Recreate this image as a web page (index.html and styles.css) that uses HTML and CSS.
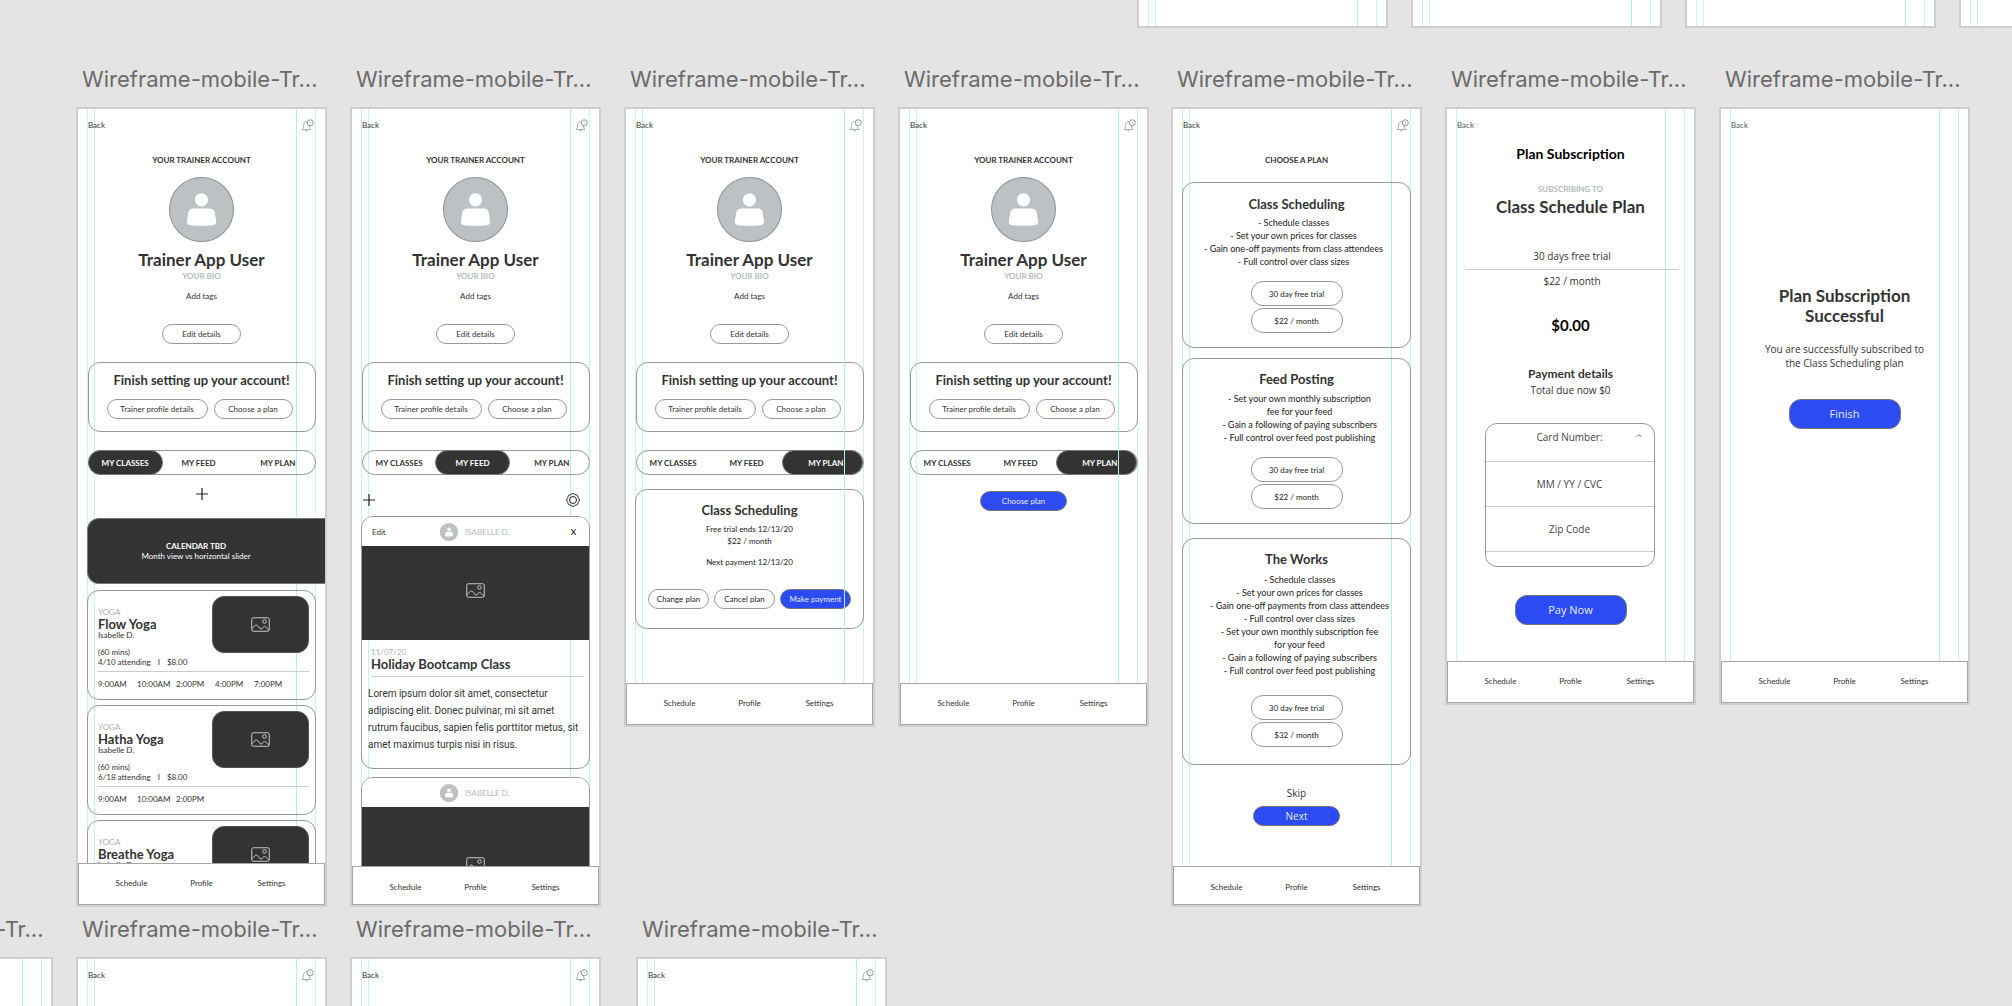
FILE: index.html
```html
<!DOCTYPE html>
<html lang="en">
<head>
<meta charset="utf-8">
<title>Trainer app wireframes</title>
<link rel="stylesheet" href="styles.css">
</head>
<body>
<svg class="defs" aria-hidden="true">
  <symbol id="bell" viewBox="0 0 26 26">
    <path d="M2 21h18c-2-2-3-4-3-7v-2M2 21c2-2 3-4 3-8 0-5 3-8 7-8M9 22c0 3 4 3 4 0" fill="none" stroke="#a9afb2" stroke-width="2"/>
    <circle cx="18.500" cy="7.500" r="6" fill="#fff" stroke="#8f9496" stroke-width="2"/>
    <path d="M18.500 4.500v5" stroke="#a9afb2" stroke-width="1.500"/>
  </symbol>
  <symbol id="person" viewBox="0 0 64 64">
    <circle cx="32" cy="32" r="31.500" fill="#bcc2c4" stroke="#8c9092"/>
    <circle cx="32" cy="22.500" r="6.500" fill="#fff"/>
    <path d="M24 31h16q4 0 5 4l1.300 8q.7 4-3.300 4.500-11 1-22 0-4-.5-3.300-4.500l1.300-8q1-4 5-4z" fill="#fff"/>
  </symbol>
  <symbol id="picture" viewBox="0 0 19 15">
    <rect x=".75" y=".75" width="17.500" height="13.500" rx="1.500" fill="none" stroke="#c4cacc"/>
    <circle cx="13.500" cy="4.500" r="1.800" fill="none" stroke="#c4cacc"/>
    <path d="M1 11.500c2-1 2.500-3.500 4.500-3.500s2.500 4 4.500 4 1.500-2.500 3.500-2.500 2 2.500 4.500 3" fill="none" stroke="#c4cacc"/>
  </symbol>
  <symbol id="plus" viewBox="0 0 12 12">
    <path d="M6 0v12M0 6h12" stroke="#222" stroke-width="1.200"/>
  </symbol>
  <symbol id="gear" viewBox="0 0 14 14">
    <path d="M5.500 1q1.500-1 3 0l.6.700 1 .1q1.700.3 2 2l.1 1 .7.700q1 1.500 0 3l-.7.600-.1 1q-.3 1.700-2 2l-1 .1-.6.700q-1.500 1-3 0l-.6-.7-1-.1q-1.700-.3-2-2l-.1-1-.7-.6q-1-1.500 0-3l.7-.7.1-1q.3-1.700 2-2l1-.1z" fill="none" stroke="#222"/>
    <circle cx="7" cy="7" r="3.500" fill="none" stroke="#222"/>
  </symbol>
  <symbol id="caret" viewBox="0 0 6 4">
    <path d="M.5 3q2.500-4 5 0" fill="none" stroke="#666" stroke-width=".8"/>
  </symbol>
</svg>

<main class="canvas">
  <div class="frame row-top col-5"><section class="board board-cut"></section></div>
  <div class="frame row-top col-6"><section class="board board-cut"></section></div>
  <div class="frame row-top col-7"><section class="board board-cut"></section></div>
  <div class="frame row-top col-8"><section class="board board-cut"></section></div>

  <div class="frame row-main col-1">
    <h2 class="label">Wireframe-mobile-Tr...</h2>
    <section class="board board-tall">
      <div class="screen">
        <header class="topbar"><a href="#" class="back">Back</a><svg class="bell"><use href="#bell"/></svg></header>
        <div class="profile">
          <p class="eyebrow">YOUR TRAINER ACCOUNT</p>
          <svg class="avatar"><use href="#person"/></svg>
          <h3 class="name">Trainer App User</h3>
          <p class="muted">YOUR BIO</p>
          <p class="tags">Add tags</p>
          <button class="pill">Edit details</button>
        </div>
        <div class="setup">
          <h4>Finish setting up your account!</h4>
          <div class="setup-actions"><button class="pill pill-wide">Trainer profile details</button><button class="pill">Choose a plan</button></div>
        </div>
        <div class="tabs"><button class="tab tab-on">MY CLASSES</button><button class="tab">MY FEED</button><button class="tab">MY PLAN</button></div>
        <button class="add" aria-label="Add class"><svg class="plus"><use href="#plus"/></svg></button>
        <div class="calendar"><strong>CALENDAR TBD</strong><span>Month view vs horizontal slider</span></div>
        <div class="classes">
          <article class="class-card">
            <div class="class-top">
              <div class="class-info"><p class="kind">YOGA</p><h4>Flow Yoga</h4><p>Isabelle D.</p><p class="length">(60 mins)</p><p class="facts"><span>4/10 attending</span><span>I</span><span>$8.00</span></p></div>
              <div class="thumb"><svg class="picture"><use href="#picture"/></svg></div>
            </div>
            <div class="times"><span>9:00AM</span><span>10:00AM</span><span>2:00PM</span><span>4:00PM</span><span>7:00PM</span></div>
          </article>
          <article class="class-card">
            <div class="class-top">
              <div class="class-info"><p class="kind">YOGA</p><h4>Hatha Yoga</h4><p>Isabelle D.</p><p class="length">(60 mins)</p><p class="facts"><span>6/18 attending</span><span>I</span><span>$8.00</span></p></div>
              <div class="thumb"><svg class="picture"><use href="#picture"/></svg></div>
            </div>
            <div class="times"><span>9:00AM</span><span>10:00AM</span><span>2:00PM</span></div>
          </article>
          <article class="class-card">
            <div class="class-top">
              <div class="class-info"><p class="kind">YOGA</p><h4>Breathe Yoga</h4><p>Isabelle D.</p></div>
              <div class="thumb"><svg class="picture"><use href="#picture"/></svg></div>
            </div>
          </article>
        </div>
      </div>
      <nav class="nav"><a href="#">Schedule</a><a href="#">Profile</a><a href="#">Settings</a></nav>
    </section>
  </div>

  <div class="frame row-main col-2">
    <h2 class="label">Wireframe-mobile-Tr...</h2>
    <section class="board board-tall">
      <div class="screen">
        <header class="topbar"><a href="#" class="back">Back</a><svg class="bell"><use href="#bell"/></svg></header>
        <div class="profile">
          <p class="eyebrow">YOUR TRAINER ACCOUNT</p>
          <svg class="avatar"><use href="#person"/></svg>
          <h3 class="name">Trainer App User</h3>
          <p class="muted">YOUR BIO</p>
          <p class="tags">Add tags</p>
          <button class="pill">Edit details</button>
        </div>
        <div class="setup">
          <h4>Finish setting up your account!</h4>
          <div class="setup-actions"><button class="pill pill-wide">Trainer profile details</button><button class="pill">Choose a plan</button></div>
        </div>
        <div class="tabs"><button class="tab">MY CLASSES</button><button class="tab tab-on">MY FEED</button><button class="tab">MY PLAN</button></div>
        <div class="feed-tools">
          <button class="icon-button" aria-label="Add post"><svg class="plus"><use href="#plus"/></svg></button>
          <button class="icon-button" aria-label="Feed settings"><svg class="gear"><use href="#gear"/></svg></button>
        </div>
        <div class="feed">
          <article class="post">
            <header class="post-head"><a href="#">Edit</a><span class="author"><svg class="avatar-small"><use href="#person"/></svg>ISABELLE D.</span><button class="close">X</button></header>
            <div class="post-image"><svg class="picture"><use href="#picture"/></svg></div>
            <div class="post-title"><p class="kind">11/07/20</p><h4>Holiday Bootcamp Class</h4></div>
            <p class="post-text">Lorem ipsum dolor sit amet, consectetur<br>adipiscing elit. Donec pulvinar, mi sit amet<br>rutrum faucibus, sapien felis porttitor metus, sit<br>amet maximus turpis nisi in risus.</p>
          </article>
          <article class="post">
            <header class="post-head"><span></span><span class="author"><svg class="avatar-small"><use href="#person"/></svg>ISABELLE D.</span><span></span></header>
            <div class="post-image post-image-tall"><svg class="picture"><use href="#picture"/></svg></div>
          </article>
        </div>
      </div>
      <nav class="nav nav-short"><a href="#">Schedule</a><a href="#">Profile</a><a href="#">Settings</a></nav>
    </section>
  </div>

  <div class="frame row-main col-3">
    <h2 class="label">Wireframe-mobile-Tr...</h2>
    <section class="board board-medium guide-over">
      <div class="screen">
        <header class="topbar"><a href="#" class="back">Back</a><svg class="bell"><use href="#bell"/></svg></header>
        <div class="profile">
          <p class="eyebrow">YOUR TRAINER ACCOUNT</p>
          <svg class="avatar"><use href="#person"/></svg>
          <h3 class="name">Trainer App User</h3>
          <p class="muted">YOUR BIO</p>
          <p class="tags">Add tags</p>
          <button class="pill">Edit details</button>
        </div>
        <div class="setup">
          <h4>Finish setting up your account!</h4>
          <div class="setup-actions"><button class="pill pill-wide">Trainer profile details</button><button class="pill">Choose a plan</button></div>
        </div>
        <div class="tabs"><button class="tab">MY CLASSES</button><button class="tab">MY FEED</button><button class="tab tab-on">MY PLAN</button></div>
        <div class="current-plan">
          <h4>Class Scheduling</h4>
          <p>Free trial ends 12/13/20</p>
          <p>$22 / month</p>
          <p class="next-payment">Next payment 12/13/20</p>
          <div class="plan-actions"><button class="pill">Change plan</button><button class="pill">Cancel plan</button><button class="pill primary">Make payment</button></div>
        </div>
      </div>
      <nav class="nav"><a href="#">Schedule</a><a href="#">Profile</a><a href="#">Settings</a></nav>
    </section>
  </div>

  <div class="frame row-main col-4">
    <h2 class="label">Wireframe-mobile-Tr...</h2>
    <section class="board board-medium guide-over">
      <div class="screen">
        <header class="topbar"><a href="#" class="back">Back</a><svg class="bell"><use href="#bell"/></svg></header>
        <div class="profile">
          <p class="eyebrow">YOUR TRAINER ACCOUNT</p>
          <svg class="avatar"><use href="#person"/></svg>
          <h3 class="name">Trainer App User</h3>
          <p class="muted">YOUR BIO</p>
          <p class="tags">Add tags</p>
          <button class="pill">Edit details</button>
        </div>
        <div class="setup">
          <h4>Finish setting up your account!</h4>
          <div class="setup-actions"><button class="pill pill-wide">Trainer profile details</button><button class="pill">Choose a plan</button></div>
        </div>
        <div class="tabs"><button class="tab">MY CLASSES</button><button class="tab">MY FEED</button><button class="tab tab-on">MY PLAN</button></div>
        <button class="pill primary choose">Choose plan</button>
      </div>
      <nav class="nav"><a href="#">Schedule</a><a href="#">Profile</a><a href="#">Settings</a></nav>
    </section>
  </div>

  <div class="frame row-main col-5">
    <h2 class="label">Wireframe-mobile-Tr...</h2>
    <section class="board board-tall">
      <div class="screen">
        <header class="topbar"><a href="#" class="back">Back</a><svg class="bell"><use href="#bell"/></svg></header>
        <p class="eyebrow">CHOOSE A PLAN</p>
        <div class="plans">
          <article class="plan plan-first">
            <h4>Class Scheduling</h4>
            <ul><li>- Schedule classes</li><li>- Set your own prices for classes</li><li>- Gain one-off payments from class attendees</li><li>- Full control over class sizes</li></ul>
            <button class="pill option">30 day free trial</button>
            <button class="pill option">$22 / month</button>
          </article>
          <article class="plan">
            <h4>Feed Posting</h4>
            <ul><li>- Set your own monthly subscription<br>fee for your feed</li><li>- Gain a following of paying subscribers</li><li>- Full control over feed post publishing</li></ul>
            <button class="pill option">30 day free trial</button>
            <button class="pill option">$22 / month</button>
          </article>
          <article class="plan plan-last">
            <h4>The Works</h4>
            <ul><li>- Schedule classes</li><li>- Set your own prices for classes</li><li>- Gain one-off payments from class attendees</li><li>- Full control over class sizes</li><li>- Set your own monthly subscription fee<br>for your feed</li><li>- Gain a following of paying subscribers</li><li>- Full control over feed post publishing</li></ul>
            <button class="pill option">30 day free trial</button>
            <button class="pill option">$32 / month</button>
          </article>
        </div>
        <a href="#" class="skip">Skip</a>
        <button class="pill primary next">Next</button>
      </div>
      <nav class="nav nav-short"><a href="#">Schedule</a><a href="#">Profile</a><a href="#">Settings</a></nav>
    </section>
  </div>

  <div class="frame row-main col-6">
    <h2 class="label">Wireframe-mobile-Tr...</h2>
    <section class="board board-short guides-few">
      <div class="screen">
        <header class="topbar"><a href="#" class="back back-light">Back</a></header>
        <h3 class="page-title">Plan Subscription</h3>
        <p class="muted">SUBSCRIBING TO</p>
        <h3 class="name">Class Schedule Plan</h3>
        <div class="terms"><p>30 days free trial</p><p>$22 / month</p></div>
        <p class="amount">$0.00</p>
        <h4 class="details-title">Payment details</h4>
        <p class="copy">Total due now $0</p>
        <form class="payment">
          <div class="fields">
            <label class="field field-first"><input placeholder="Card Number:" aria-label="Card number"><svg class="caret"><use href="#caret"/></svg></label>
            <label class="field"><input placeholder="MM / YY / CVC" aria-label="Expiry and CVC"></label>
            <label class="field"><input placeholder="Zip Code" aria-label="Zip code"></label>
          </div>
          <button type="button" class="pill primary large">Pay Now</button>
        </form>
      </div>
      <nav class="nav"><a href="#">Schedule</a><a href="#">Profile</a><a href="#">Settings</a></nav>
    </section>
  </div>

  <div class="frame row-main col-7">
    <h2 class="label">Wireframe-mobile-Tr...</h2>
    <section class="board board-short guides-few">
      <div class="screen">
        <header class="topbar"><a href="#" class="back back-light">Back</a></header>
        <div class="success">
          <h3 class="name">Plan Subscription<br>Successful</h3>
          <p class="copy">You are successfully subscribed to<br>the Class Scheduling plan</p>
          <button class="pill primary large">Finish</button>
        </div>
      </div>
      <nav class="nav"><a href="#">Schedule</a><a href="#">Profile</a><a href="#">Settings</a></nav>
    </section>
  </div>

  <div class="frame row-low col-0">
    <h2 class="label">Wireframe-mobile-Tr...</h2>
    <section class="board board-short"></section>
  </div>
  <div class="frame row-low col-1">
    <h2 class="label">Wireframe-mobile-Tr...</h2>
    <section class="board board-short"><header class="topbar"><a href="#" class="back">Back</a><svg class="bell"><use href="#bell"/></svg></header></section>
  </div>
  <div class="frame row-low col-2">
    <h2 class="label">Wireframe-mobile-Tr...</h2>
    <section class="board board-short"><header class="topbar"><a href="#" class="back">Back</a><svg class="bell"><use href="#bell"/></svg></header></section>
  </div>
  <div class="frame row-low col-3b">
    <h2 class="label">Wireframe-mobile-Tr...</h2>
    <section class="board board-short"><header class="topbar"><a href="#" class="back">Back</a><svg class="bell"><use href="#bell"/></svg></header></section>
  </div>
</main>
</body>
</html>
```
FILE: styles.css
```css
* { box-sizing: border-box; }
body, h2, h3, h4, p, ul { margin: 0; padding: 0; }
ul { list-style: none; }
body {
  background: #e4e4e4;
  color: #333;
  font: 8px/12px Lato, sans-serif;
}
button, input { font: inherit; color: inherit; margin: 0; padding: 0; border: 0; background: none; }
a { color: inherit; text-decoration: none; }
svg { display: block; flex: none; }
.defs { position: absolute; width: 0; height: 0; }

/* Canvas: artboards are placed freely */
.canvas { position: relative; height: 100vh; overflow: hidden; }
.frame { position: absolute; width: 251px; }
.row-top { top: 0; }
.row-main { top: 64px; }
.row-low { top: 914px; }
.col-0 { left: -198px; }
.col-1 { left: 76px; }
.col-2 { left: 350px; }
.col-3 { left: 624px; }
.col-3b { left: 636px; }
.col-4 { left: 898px; }
.col-5 { left: 1171px; }
.col-6 { left: 1445px; }
.col-7 { left: 1719px; }
.row-top.col-5 { left: 1137px; }
.row-top.col-6 { left: 1411px; }
.row-top.col-7 { left: 1685px; }
.row-top.col-8 { left: 1959px; }

.label {
  margin: 0 0 13px 6px;
  color: #6b6b6b;
  font: 400 22px/30px Inter, sans-serif;
  white-space: nowrap;
}

.board {
  position: relative;
  display: flex;
  flex-direction: column;
  overflow: hidden;
  border: 2px solid #cfcfcf;
  background: #fff;
}
.board-cut { height: 28px; border-top: 0; }
.board-tall { height: 800px; }
.board-medium { height: 620px; }
.board-short { height: 598px; }

/* Layout guides */
.board::before {
  content: "";
  position: absolute;
  inset: 0;
  pointer-events: none;
  background:
    linear-gradient(#c9f3f0, #c9f3f0) 9px 0 / 1px 100% no-repeat,
    linear-gradient(#c9f3f0, #c9f3f0) 16px 0 / 1px 100% no-repeat,
    linear-gradient(#b9efeb, #b9efeb) 218px 0 / 1px 100% no-repeat,
    linear-gradient(#c9f3f0, #c9f3f0) 237px 0 / 1px 100% no-repeat;
}
.guides-few::before {
  background:
    linear-gradient(#c9f3f0, #c9f3f0) 9px 0 / 1px 100% no-repeat,
    linear-gradient(#b9efeb, #b9efeb) 218px 0 / 1px 100% no-repeat,
    linear-gradient(#c9f3f0, #c9f3f0) 237px 0 / 1px 100% no-repeat;
}
.guide-over::after {
  content: "";
  position: absolute;
  z-index: 1;
  inset: 0 auto 0 218px;
  width: 1px;
  background: #b9efeb;
}

.screen {
  position: relative;
  flex: 1;
  min-height: 0;
  overflow: hidden;
  display: flex;
  flex-direction: column;
  align-items: center;
}
.screen > * { flex: none; }

.nav {
  position: relative;
  z-index: 2;
  flex: none;
  display: grid;
  grid-template-columns: repeat(3, 70px);
  justify-content: center;
  align-items: center;
  height: 42px;
  padding-bottom: 2px;
  border: 1px solid #a6a6a6;
  background: #fff;
  text-align: center;
}
.nav-short { height: 39px; padding: 2px 0 0; }

.topbar {
  position: relative;
  align-self: stretch;
  display: flex;
  align-items: center;
  justify-content: space-between;
  height: 32px;
  padding: 0 11px 0 10px;
}
.back-light { color: #555; }
.bell { width: 13px; height: 13px; }

.eyebrow { margin-top: 13px; font-weight: 700; }
.muted { color: #b4babc; font-weight: 700; }
.kind { color: #a9afb2; }
.name { font-size: 17px; line-height: 20px; }
.copy { font: 10px/14px "Open Sans", sans-serif; }

.pill {
  width: 79px;
  height: 20px;
  border: 1px solid #999;
  border-radius: 12px;
}
.pill-wide { width: 101px; }
.primary { border-color: #777; background: #2c4bf2; color: #e6eaff; }
.large { width: 112px; height: 30px; font: 11px/14px "Open Sans", sans-serif; }

.profile { display: flex; flex-direction: column; align-items: center; }
.avatar { width: 65px; height: 65px; margin: 11px 0 8px; }
.tags { margin: 8px 0 22px; }

.setup {
  width: 228px;
  height: 70px;
  margin-top: 18px;
  padding: 9px 0;
  border: 1px solid #999;
  border-radius: 12px;
  text-align: center;
}
.setup h4 { font-size: 13px; line-height: 16px; }
.setup-actions {
  display: flex;
  justify-content: center;
  gap: 6px;
  margin-top: 11px;
  padding-right: 4px;
}

.tabs {
  display: flex;
  width: 228px;
  height: 25px;
  margin-top: 18px;
  border: 1px solid #999;
  border-radius: 13px;
}
.tab { flex: 1; font-weight: 700; }
.tab:last-child { padding-left: 6px; }
.tab-on { margin: -1px; border: 1px solid #777; border-radius: 13px; background: #333; color: #fff; }

.plus { width: 12px; height: 12px; }
.gear { width: 14px; height: 14px; }
.picture { width: 19px; height: 15px; }
.add { margin: 13px 0 18px; }

.calendar {
  align-self: flex-end;
  display: flex;
  flex-direction: column;
  align-items: center;
  justify-content: center;
  width: 238px;
  height: 66px;
  padding-right: 21px;
  border: 1px solid #777;
  border-right: 0;
  border-radius: 12px 0 0 12px;
  background: #333;
  color: #fff;
  line-height: 10px;
}

.classes { display: grid; gap: 5px; width: 229px; margin-top: 6px; }
.class-card { height: 110px; padding: 5px 6px 0 10px; border: 1px solid #999; border-radius: 12px; }
.class-top { display: flex; justify-content: space-between; height: 76px; border-bottom: 1px solid #ccc; }
.class-info { padding-top: 10px; line-height: 10px; white-space: nowrap; }
.class-info .kind { line-height: 12px; }
.class-info h4 { font-size: 13px; line-height: 12px; }
.length { margin-top: 7px; }
.facts { display: flex; gap: 7px; }
.thumb {
  display: flex;
  align-items: center;
  justify-content: center;
  width: 97px;
  height: 57px;
  border: 1px solid #555;
  border-radius: 12px;
  background: #333;
}
.times { display: grid; grid-template-columns: repeat(5, 39px); margin-top: 6px; }

.feed-tools {
  align-self: stretch;
  display: flex;
  align-items: center;
  justify-content: space-between;
  height: 41px;
  padding: 8px 19px 0 11px;
}
.feed { display: grid; gap: 8px; width: 229px; }
.post { height: 253px; overflow: hidden; border: 1px solid #999; border-radius: 12px; }
.post-head {
  display: grid;
  grid-template-columns: 1fr 68px 1fr;
  align-items: center;
  height: 29px;
  padding: 0 13px 0 10px;
  background: #fff;
}
.author { display: flex; align-items: center; gap: 7px; color: #b4babc; white-space: nowrap; }
.avatar-small { width: 18px; height: 18px; }
.close { justify-self: end; font-weight: 700; }
.post-image {
  display: flex;
  align-items: center;
  justify-content: center;
  height: 94px;
  padding-bottom: 6px;
  background: #333;
}
.post-image-tall { height: 120px; }
.post-title { height: 37px; margin: 0 5px 0 9px; padding-top: 6px; border-bottom: 1px solid #ccc; }
.post-title .kind { line-height: 12px; }
.post-title h4 { font-size: 13px; line-height: 12px; }
.post-text { margin: 8px 0 0 6px; font: 10px/17px Roboto, sans-serif; white-space: nowrap; }

.current-plan {
  display: flex;
  flex-direction: column;
  align-items: center;
  width: 229px;
  height: 140px;
  margin-top: 14px;
  padding-top: 12px;
  border: 1px solid #999;
  border-radius: 12px;
  color: #222;
}
.current-plan h4 { margin-bottom: 5px; font-size: 13px; line-height: 16px; color: #333; }
.next-payment { margin: 9px 0 21px; }
.plan-actions { display: flex; gap: 5px; }
.plan-actions .pill { width: 61px; }
.plan-actions .primary { width: 71px; }
.choose, .next { width: 87px; }
.choose { margin-top: 16px; }

.plans { display: grid; gap: 10px; width: 229px; margin-top: 16px; }
.plan {
  display: flex;
  flex-direction: column;
  align-items: center;
  height: 166px;
  padding-top: 12px;
  border: 1px solid #999;
  border-radius: 12px;
  text-align: center;
  color: #222;
}
.plan h4 { margin-bottom: 5px; font-size: 13px; line-height: 16px; color: #333; }
.plan ul { margin-bottom: 13px; padding-left: 6px; font-size: 9px; line-height: 13px; white-space: nowrap; }
.plan-first { padding-top: 13px; }
.plan-first h4 { margin-bottom: 4px; }
.plan-first ul { padding: 0 6px 0 0; }
.plan-last { height: 227px; margin-top: 4px; }
.plan-last ul { margin: 1px 0 18px; }
.plan .option { width: 92px; height: 25px; }
.option + .option { margin-top: 2px; }
.skip { margin: 21px 0 6px; font: 10px/14px "Open Sans", sans-serif; }
.next { font: 10px/14px "Open Sans", sans-serif; }

.page-title { margin: 4px 0 20px; font-size: 14px; line-height: 18px; color: #000; }
.page-title + .muted { margin-bottom: 2px; }
.terms { align-self: stretch; margin: 27px 16px 0 19px; font: 10px/25px "Open Sans", sans-serif; text-align: center; }
.terms p + p { border-top: 1px solid #ccc; line-height: 23px; }
.amount { margin: 22px 0 29px; font-size: 15px; line-height: 20px; font-weight: 700; color: #000; }
.details-title { font-size: 12px; line-height: 19px; }
.payment { display: flex; flex-direction: column; align-items: center; margin-top: 26px; }
.fields {
  width: 170px;
  height: 144px;
  margin: 0 2px 28px 0;
  border: 1px solid #999;
  border-radius: 12px;
  font: 10px/14px "Open Sans", sans-serif;
}
.field { position: relative; display: flex; align-items: center; height: 45px; border-bottom: 1px solid #ccc; }
.field-first { height: 38px; padding-bottom: 11px; }
.field input { width: 100%; text-align: center; outline: 0; }
.field input::placeholder { color: #444; opacity: 1; }
.caret { position: absolute; right: 12px; top: 10px; width: 6px; height: 4px; }

.success { display: flex; flex-direction: column; align-items: center; margin-top: 145px; text-align: center; }
.success .copy { margin: 16px 0 29px; }
```
